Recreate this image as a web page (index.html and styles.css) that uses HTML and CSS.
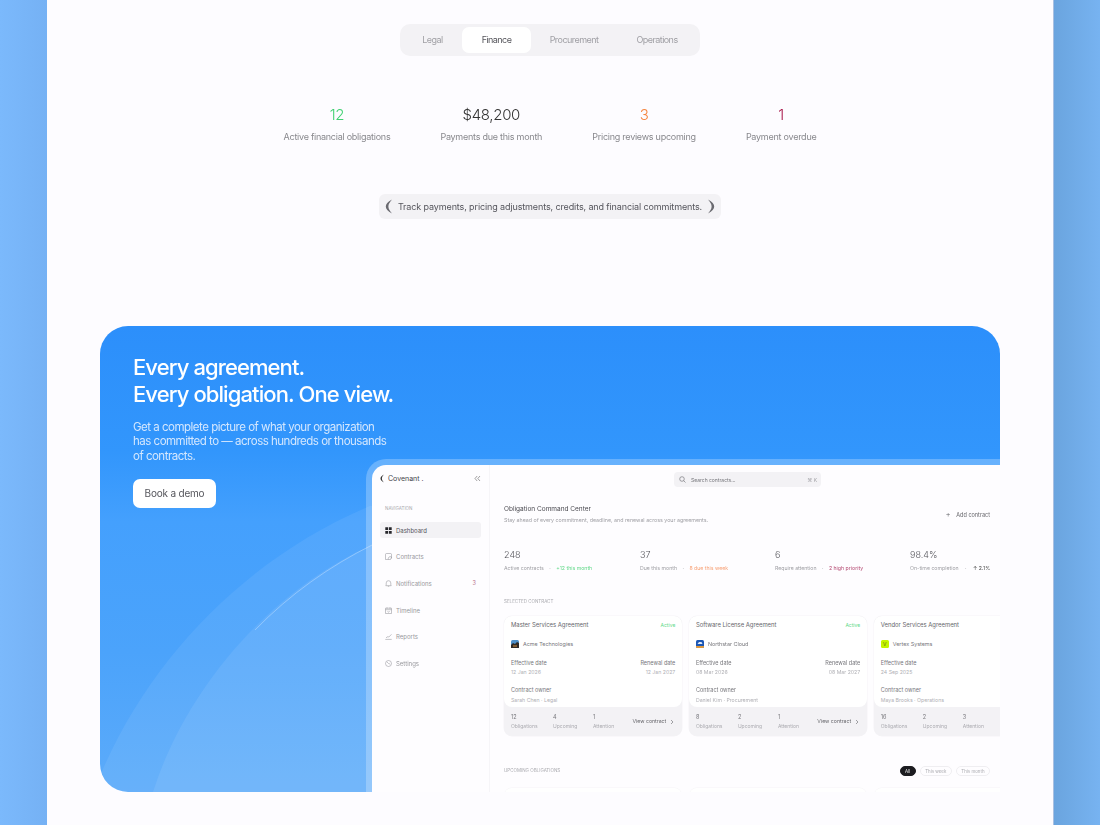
FILE: index.html
```html
<!DOCTYPE html>
<html lang="en">
<head>
    <meta charset="UTF-8">
    <meta name="viewport" content="width=device-width, initial-scale=1.0">
    <title>Covenant - Obligations</title>
    <link rel="stylesheet" href="styles.css">
</head>
<body>
<div class="sheet">
    <div class="tabs">
        <span class="tab tab-legal">Legal</span>
        <span class="tab tab-finance active">Finance</span>
        <span class="tab tab-procurement">Procurement</span>
        <span class="tab tab-operations">Operations</span>
    </div>

    <div class="metrics">
        <div class="metric"><div class="metric-value green">12</div><div class="metric-label">Active financial obligations</div></div>
        <div class="metric"><div class="metric-value">$48,200</div><div class="metric-label">Payments due this month</div></div>
        <div class="metric"><div class="metric-value orange">3</div><div class="metric-label">Pricing reviews upcoming</div></div>
        <div class="metric"><div class="metric-value crimson">1</div><div class="metric-label">Payment overdue</div></div>
    </div>

    <div class="quote-row">
        <div class="quote">
            <svg class="laurel" width="8" height="15" viewBox="0 0 8 15"><path d="M7 .5C2.600 2.800.8 5 .8 7.500S2.600 12.200 7 14.500C4.600 11.800 3.400 9.700 3.400 7.500S4.600 3.200 7 .5z" fill="#6a6a70"/></svg>
            <span>Track payments, pricing adjustments, credits, and financial commitments.</span>
            <svg class="laurel" width="8" height="15" viewBox="0 0 8 15"><path d="M1 .5C5.400 2.800 7.200 5 7.200 7.500S5.400 12.200 1 14.500C3.400 11.800 4.600 9.700 4.600 7.500S3.400 3.200 1 .5z" fill="#6a6a70"/></svg>
        </div>
    </div>

    <section class="hero">
        <svg class="hero-arcs" width="900" height="466" viewBox="0 0 900 466">
            <path d="M0 450C50 330 150 230 270 180H900V466H0z" fill="#fff" fill-opacity="0.07"/>
            <path d="M53 466C85 364 170 264 272 219V466z" fill="#fff" fill-opacity="0.08"/>
            <path d="M155 304C190 268 230 240 272 219" fill="none" stroke="#fff" stroke-opacity="0.3" stroke-width="1"/>
        </svg>
        <div class="hero-copy">
            <h2>Every agreement.<br>Every obligation. One view.</h2>
            <p>Get a complete picture of what your organization has committed to — across hundreds or thousands of contracts.</p>
            <span class="demo-btn">Book a demo</span>
        </div>

        <div class="mock-frame">
            <div class="mock">
                <aside class="side">
                    <div class="brand">
                        <svg width="5" height="9" viewBox="0 0 5 9"><path d="M4 .5C1.500 1.700.5 3 .5 4.500S1.500 7.300 4 8.500C2.600 7 1.900 5.800 1.900 4.500S2.600 2 4 .5z" fill="#333"/></svg>
                        <span class="brand-name">Covenant .</span>
                        <svg class="collapse" width="7" height="7" viewBox="0 0 7 7"><path d="M3.200 1L1 3.500 3.200 6M6 1L3.800 3.500 6 6" fill="none" stroke="#777" stroke-width="0.7"/></svg>
                    </div>
                    <div class="nav-title">NAVIGATION</div>
                    <nav class="nav">
                        <div class="nav-item current">
                            <svg width="7" height="7" viewBox="0 0 7 7"><path d="M.3.3h2.800v2.800H.3zM3.900.3h2.800v2.800H3.900zM.3 3.900h2.800v2.800H.3zM3.900 3.900h2.800v2.800H3.900z" fill="#26262b"/></svg>
                            <span>Dashboard</span>
                        </div>
                        <div class="nav-item">
                            <svg width="7" height="7" viewBox="0 0 7 7"><path d="M.5 6.500V1.500a1 1 0 0 1 1-1h4a1 1 0 0 1 1 1v4M.5 6.500h3M3.500 6.500a2 2 0 0 1 3-2.500l-1 2.500z" fill="none" stroke="#8b8b90" stroke-width="0.5"/></svg>
                            <span>Contracts</span>
                        </div>
                        <div class="nav-item">
                            <svg width="7" height="7" viewBox="0 0 7 7"><path d="M1.200 5.200V3a2.300 2.300 0 0 1 4.600 0v2.200l.5.5H.7zM2.800 6.300h1.400" fill="none" stroke="#8b8b90" stroke-width="0.5"/></svg>
                            <span>Notifications</span>
                            <em class="nav-count">3</em>
                        </div>
                        <div class="nav-item">
                            <svg width="7" height="7" viewBox="0 0 7 7"><path d="M.5 1.200h6v5.300h-6zM2 .3v1.400M5 .3v1.400M.5 2.700h6M2.500 4.500l1 .8 1-1.300" fill="none" stroke="#8b8b90" stroke-width="0.5"/></svg>
                            <span>Timeline</span>
                        </div>
                        <div class="nav-item">
                            <svg width="7" height="7" viewBox="0 0 7 7"><path d="M.3 6.400h6.400M1 4.800l2-1.300.8.6L6.500 1.300" fill="none" stroke="#8b8b90" stroke-width="0.5"/></svg>
                            <span>Reports</span>
                        </div>
                        <div class="nav-item">
                            <svg width="7" height="7" viewBox="0 0 7 7"><circle cx="3.500" cy="3.500" r="3" fill="none" stroke="#8b8b90" stroke-width="0.5"/><path d="M1.900 1.900l1.600 1.600 1.800.6" fill="none" stroke="#8b8b90" stroke-width="0.5"/></svg>
                            <span>Settings</span>
                        </div>
                    </nav>
                </aside>

                <main class="main">
                    <div class="search-row">
                        <div class="search">
                            <svg width="7" height="7" viewBox="0 0 7 7"><circle cx="3" cy="3" r="2.300" fill="none" stroke="#66666b" stroke-width="0.6"/><path d="M4.700 4.700l1.800 1.800" stroke="#66666b" stroke-width="0.6"/></svg>
                            <span>Search contracts...</span>
                            <b>⌘ K</b>
                        </div>
                    </div>

                    <div class="head">
                        <div>
                            <div class="head-title">Obligation Command Center</div>
                            <div class="head-sub">Stay ahead of every commitment, deadline, and renewal across your agreements.</div>
                        </div>
                        <div class="add"><span class="plus">+</span> Add contract</div>
                    </div>

                    <div class="stats">
                        <div class="stat"><div class="stat-value">248</div><div class="stat-line">Active contracts <i>·</i> <span class="green">+12 this month</span></div></div>
                        <div class="stat"><div class="stat-value">37</div><div class="stat-line">Due this month <i>·</i> <span class="orange">8 due this week</span></div></div>
                        <div class="stat"><div class="stat-value">6</div><div class="stat-line">Require attention <i>·</i> <span class="crimson">2 high priority</span></div></div>
                        <div class="stat"><div class="stat-value">98.4%</div><div class="stat-line">On-time completion <i>·</i> <span class="dark">↑ 2.1%</span></div></div>
                    </div>

                    <div class="section-label">SELECTED CONTRACT</div>
                    <div class="cards">
                        <article class="card">
                            <div class="card-top">
                                <div class="card-head"><span>Master Services Agreement</span><em class="green">Active</em></div>
                                <div class="party">
                                    <svg width="8" height="8" viewBox="0 0 8 8"><rect width="8" height="8" rx="1.500" fill="#4d8fc9"/><path d="M0 5l2-2 2 1 2-2 2 1v5H0z" fill="#2f2a26"/><path d="M2 5.500h4v1H2z" fill="#d08a3a"/></svg>
                                    <span>Acme Technologies</span>
                                </div>
                                <div class="dates">
                                    <div><div class="k">Effective date</div><div class="v">12 Jan 2026</div></div>
                                    <div class="right"><div class="k">Renewal date</div><div class="v">12 Jan 2027</div></div>
                                </div>
                                <div class="k">Contract owner</div>
                                <div class="v">Sarah Chen · Legal</div>
                            </div>
                            <div class="card-foot">
                                <div class="count c1"><div>12</div><small>Obligations</small></div>
                                <div class="count c2"><div>4</div><small>Upcoming</small></div>
                                <div class="count c3"><div>1</div><small>Attention</small></div>
                                <div class="view">View contract <svg width="4" height="6" viewBox="0 0 4 6"><path d="M1 1l2 2-2 2" fill="none" stroke="#66666b" stroke-width="0.6"/></svg></div>
                            </div>
                        </article>
                        <article class="card">
                            <div class="card-top">
                                <div class="card-head"><span>Software License Agreement</span><em class="green">Active</em></div>
                                <div class="party">
                                    <svg width="8" height="8" viewBox="0 0 8 8"><rect width="8" height="8" rx="1.500" fill="#1c57b5"/><path d="M1.500 4l1.500-2h2.500l1 2z" fill="#dbe8f8"/><path d="M0 6h8v.5a1.500 1.500 0 0 1-1.500 1.500h-5A1.500 1.500 0 0 1 0 6.500z" fill="#e09a3c"/></svg>
                                    <span>Northstar Cloud</span>
                                </div>
                                <div class="dates">
                                    <div><div class="k">Effective date</div><div class="v">08 Mar 2026</div></div>
                                    <div class="right"><div class="k">Renewal date</div><div class="v">08 Mar 2027</div></div>
                                </div>
                                <div class="k">Contract owner</div>
                                <div class="v">Daniel Kim · Procurement</div>
                            </div>
                            <div class="card-foot">
                                <div class="count c1"><div>8</div><small>Obligations</small></div>
                                <div class="count c2"><div>2</div><small>Upcoming</small></div>
                                <div class="count c3"><div>1</div><small>Attention</small></div>
                                <div class="view">View contract <svg width="4" height="6" viewBox="0 0 4 6"><path d="M1 1l2 2-2 2" fill="none" stroke="#66666b" stroke-width="0.6"/></svg></div>
                            </div>
                        </article>
                        <article class="card">
                            <div class="card-top">
                                <div class="card-head"><span>Vendor Services Agreement</span></div>
                                <div class="party">
                                    <span class="vertex">V</span>
                                    <span>Vertex Systems</span>
                                </div>
                                <div class="dates">
                                    <div><div class="k">Effective date</div><div class="v">24 Sep 2025</div></div>
                                </div>
                                <div class="k">Contract owner</div>
                                <div class="v">Maya Brooks · Operations</div>
                            </div>
                            <div class="card-foot">
                                <div class="count c1"><div>16</div><small>Obligations</small></div>
                                <div class="count c2"><div>2</div><small>Upcoming</small></div>
                                <div class="count c3"><div>3</div><small>Attention</small></div>
                            </div>
                        </article>
                    </div>

                    <div class="upcoming-head">
                        <div class="section-label flat">UPCOMING OBLIGATIONS</div>
                        <div class="pills">
                            <span class="pill on">All</span>
                            <span class="pill">This week</span>
                            <span class="pill">This month</span>
                        </div>
                    </div>
                    <div class="cards stub-row">
                        <div class="card stub"></div>
                        <div class="card stub"></div>
                        <div class="card stub"></div>
                    </div>
                </main>
            </div>
        </div>
    </section>
</div>
</body>
</html>
```

FILE: styles.css
```css
* {
    box-sizing: border-box;
}
html, body {
    margin: 0;
    height: 825px;
    overflow: hidden;
}
body {
    font-family: Inter, 'Liberation Sans', sans-serif;
    background: linear-gradient(90deg, #7bb9fc 0, #75b1f4 47px, #6aa4de 1053px, #77b3f1 1100px);
    color: #333;
}
.sheet {
    width: 1006px;
    height: 825px;
    margin-left: 47px;
    background: #fdfcff;
    box-shadow: 1px 0 0 #a9c0e2;
    display: flex;
    flex-direction: column;
    align-items: center;
    padding-top: 24px;
    overflow: hidden;
}

/* tabs */
.tabs {
    width: 300px;
    height: 32px;
    background: #f3f2f5;
    border-radius: 10px;
    display: flex;
    align-items: center;
    padding: 3px;
    font-size: 9px;
    letter-spacing: -0.55px;
    color: #a0a0a5;
    filter: blur(0.25px);
}
.tab {
    height: 26px;
    line-height: 26px;
    text-align: center;
    border-radius: 7px;
}
.tab-legal { width: 59px; }
.tab-finance { width: 69px; }
.tab-procurement { width: 86px; }
.tab-operations { width: 80px; }
.tab.active {
    background: #fff;
    color: #55555b;
}

/* metrics */
.metrics {
    display: flex;
    gap: 50px;
    margin-top: 49px;
    filter: blur(0.25px);
}
.metric {
    text-align: center;
}
.metric-value {
    font-size: 15px;
    line-height: 20px;
    font-weight: 300;
    letter-spacing: -0.3px;
    color: #333;
}
.metric-label {
    font-size: 9px;
    line-height: 12px;
    letter-spacing: -0.25px;
    margin-top: 6px;
    color: #88888d;
}
.green { color: #3ed070; }
.orange { color: #f5853f; }
.crimson { color: #a8174a; }
.dark { color: #444; }

/* quote */
.quote-row {
    margin-top: 51px;
}
.quote {
    height: 25px;
    display: flex;
    align-items: center;
    gap: 5px;
    padding: 0 6px;
    background: #f3f2f5;
    border-radius: 6px;
    font-size: 9px;
    letter-spacing: -0.12px;
    color: #55555c;
    filter: blur(0.25px);
}
.quote span {
    padding-bottom: 1px;
}

/* hero */
.hero {
    position: relative;
    width: 900px;
    height: 466px;
    margin-top: 107px;
    flex: none;
    overflow: hidden;
    border-radius: 28px 28px 0 28px;
    background: linear-gradient(180deg, #2c8ffb 0%, #3296fc 27%, #44a0fd 42%, #4ba3fb 70%, #5cabfa 100%);
    color: #fff;
}
.hero-arcs {
    position: absolute;
    left: 0;
    top: 0;
}
.hero-copy {
    position: relative;
    width: 260px;
    padding: 28px 0 0 33px;
    box-sizing: content-box;
    filter: blur(0.2px);
}
.hero-copy h2 {
    margin: 0;
    width: 300px;
    font-size: 22px;
    line-height: 27px;
    font-weight: 500;
    letter-spacing: -0.9px;
}
.hero-copy p {
    margin: 12px 0 0;
    font-size: 11.5px;
    line-height: 14.4px;
    letter-spacing: -0.5px;
    color: #d4e7fe;
}
.demo-btn {
    display: inline-block;
    margin-top: 16px;
    width: 83px;
    height: 29px;
    line-height: 29px;
    text-align: center;
    background: #fff;
    border-radius: 7px;
    font-size: 10px;
    letter-spacing: -0.2px;
    color: #55555b;
}

/* mock app */
.mock-frame {
    position: absolute;
    left: 266px;
    top: 133px;
    width: 634px;
    height: 333px;
    padding: 6px 0 0 6px;
    background: rgba(255, 255, 255, 0.25);
    border-radius: 20px 0 0 0;
}
.mock {
    display: flex;
    width: 628px;
    height: 327px;
    background: #fefdff;
    border-radius: 14px 0 0 0;
    overflow: hidden;
    color: #55555c;
    filter: blur(0.35px);
}
.side {
    width: 118px;
    flex: none;
    padding: 7px 8px 0;
    border-right: 1px solid #f6f5f8;
}
.brand {
    display: flex;
    align-items: center;
    gap: 3px;
    height: 12px;
    font-size: 7px;
    color: #44444a;
}
.brand-name {
    flex: 1;
}
.nav-title {
    margin-top: 22px;
    font-size: 4.5px;
    line-height: 6px;
    color: #a8a8ad;
    padding-left: 5px;
}
.nav {
    display: flex;
    flex-direction: column;
    gap: 10.7px;
    margin-top: 10px;
}
.nav-item {
    display: flex;
    align-items: center;
    gap: 4px;
    height: 16px;
    padding: 0 5px;
    font-size: 6px;
    color: #98989d;
    border-radius: 3px;
}
.nav-item span {
    flex: 1;
}
.nav-item.current {
    background: #f3f2f5;
    color: #55555c;
}
.nav-count {
    font-style: normal;
    font-size: 5.5px;
    color: #b8708c;
}
.main {
    flex: 1;
    min-width: 0;
    padding: 7px 10px 0 14px;
}
.search-row {
    display: flex;
    justify-content: center;
}
.search {
    width: 147px;
    height: 15px;
    margin-left: 1px;
    background: #f3f2f5;
    border-radius: 4px;
    display: flex;
    align-items: center;
    gap: 5px;
    padding: 0 4px 0 5px;
    font-size: 5px;
    color: #77777c;
}
.search span {
    flex: 1;
}
.search b {
    font-weight: 400;
    color: #a0a0a5;
}
.head {
    display: flex;
    justify-content: space-between;
    align-items: center;
    margin-top: 18px;
}
.head-title {
    font-size: 6.5px;
    line-height: 9px;
    color: #4a4a50;
}
.head-sub {
    font-size: 5.3px;
    line-height: 7px;
    margin-top: 2.5px;
    color: #a0a0a5;
}
.add {
    font-size: 5.5px;
    color: #66666b;
}
.plus {
    font-size: 8px;
    font-weight: 300;
    margin-right: 4px;
}
.stats {
    display: flex;
    justify-content: space-between;
    margin-top: 25px;
}
.stat:nth-child(1) { width: 136px; }
.stat:nth-child(2) { width: 135px; }
.stat:nth-child(3) { width: 135px; }
.stat:nth-child(4) { width: 80px; }
.stat:nth-child(4) i { margin: 0 5px; }
.stat-value {
    font-size: 9px;
    line-height: 12px;
    font-weight: 300;
    color: #55555b;
}
.stat-line {
    margin-top: 4px;
    font-size: 5.2px;
    line-height: 7px;
    color: #a0a0a5;
    white-space: nowrap;
}
.stat-line i {
    font-style: normal;
    margin: 0 4px;
}
.stat-line .green { color: #63d98a; }
.stat-line .orange { color: #f7a176; }
.stat-line .crimson { color: #b54a72; }
.section-label {
    margin-top: 27px;
    font-size: 4.5px;
    line-height: 6px;
    color: #ababb0;
}
.section-label.flat {
    margin-top: 0;
}
.cards {
    display: flex;
    gap: 6.6px;
    margin-top: 11.5px;
    width: 600px;
}
.card {
    flex: none;
    width: 178.3px;
    height: 120px;
    background: #f3f2f5;
    border-radius: 8px;
    box-shadow: 0 0 0 0.5px #f5f4f7;
    overflow: hidden;
}
.card-top {
    height: 90.5px;
    padding: 5px 7px 0;
    background: #fff;
    border-radius: 8px;
}
.card-head {
    display: flex;
    justify-content: space-between;
    font-size: 5.9px;
    line-height: 8px;
    color: #66666b;
}
.card-head em {
    font-style: normal;
    font-size: 5px;
    color: #63d98a;
}
.party {
    display: flex;
    align-items: center;
    gap: 4px;
    height: 8px;
    margin-top: 10.5px;
    font-size: 5.4px;
    color: #77777c;
}
.vertex {
    width: 8px;
    height: 8px;
    background: #c4f500;
    border-radius: 1.5px;
    text-align: center;
    line-height: 8px;
    font-size: 5px;
    color: #5a6a10;
}
.dates {
    display: flex;
    justify-content: space-between;
    margin-top: 12px;
    margin-bottom: 11px;
}
.right {
    text-align: right;
}
.k {
    font-size: 5.5px;
    line-height: 7px;
    color: #77777c;
}
.v {
    margin-top: 2.5px;
    font-size: 5.2px;
    line-height: 7px;
    color: #b0b0b5;
}
.card-foot {
    position: relative;
    height: 29.5px;
}
.count {
    position: absolute;
    top: 7px;
    font-size: 5.5px;
    line-height: 7px;
    color: #77777c;
}
.count small {
    display: block;
    margin-top: 2px;
    font-size: 5px;
    color: #ababb0;
}
.c1 { left: 7px; }
.c2 { left: 49px; }
.c3 { left: 89px; }
.view {
    position: absolute;
    right: 8px;
    top: 11.5px;
    display: flex;
    align-items: center;
    gap: 4px;
    font-size: 5.2px;
    line-height: 7px;
    color: #66666b;
}
.upcoming-head {
    display: flex;
    justify-content: space-between;
    align-items: center;
    margin-top: 29.5px;
}
.pills {
    display: flex;
    gap: 4px;
}
.pill {
    height: 10px;
    line-height: 9px;
    padding: 0 4.5px;
    font-size: 4.4px;
    color: #ababb0;
    border: 0.5px solid #efeef1;
    border-radius: 5px;
}
.pill.on {
    background: #1c1c20;
    border-color: #1c1c20;
    color: #eee;
}
.stub-row {
    margin-top: 12.5px;
}
.stub {
    background: #fff;
}
```
